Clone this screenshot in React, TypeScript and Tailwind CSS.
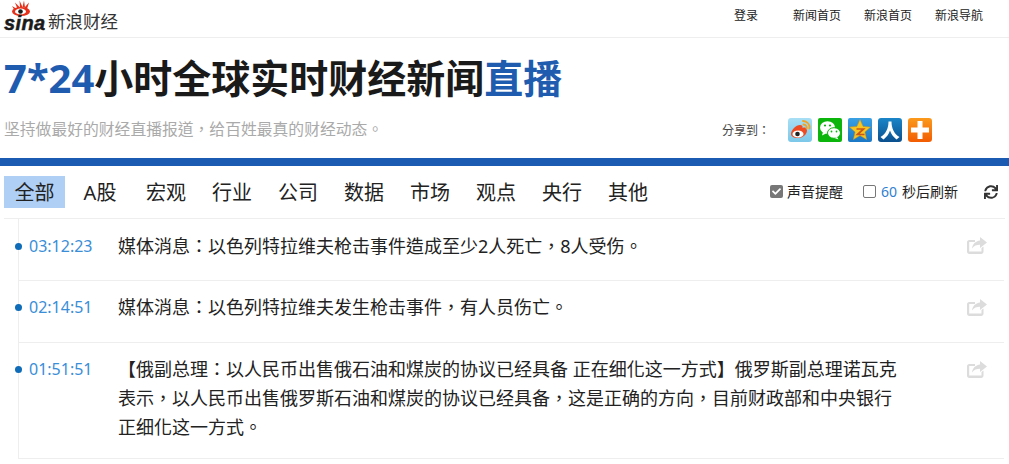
import { FaSync, FaCheck } from "react-icons/fa";

const cjk = "font-['Noto_Sans','Noto_Sans_CJK_SC',sans-serif]";
const cjkCentered = "font-['Noto_Sans','Noto_Sans_CJK_TC',sans-serif]";

const navLinks = ["登录", "新闻首页", "新浪首页", "新浪导航"];
const tabs = ["全部", "A股", "宏观", "行业", "公司", "数据", "市场", "观点", "央行", "其他"];

const news = [
  { time: "03:12:23", text: "媒体消息：以色列特拉维夫枪击事件造成至少2人死亡，8人受伤。" },
  { time: "02:14:51", text: "媒体消息：以色列特拉维夫发生枪击事件，有人员伤亡。" },
  {
    time: "01:51:51",
    text: "【俄副总理：以人民币出售俄石油和煤炭的协议已经具备 正在细化这一方式】俄罗斯副总理诺瓦克表示，以人民币出售俄罗斯石油和煤炭的协议已经具备，这是正确的方向，目前财政部和中央银行正细化这一方式。",
  },
];

function SinaLogo() {
  return (
    <div className="flex items-end h-[37px] pl-[4px] pb-[6px]">
      <div className="relative w-[44px] h-[30px]">
        <svg viewBox="0 0 20 16" className="absolute left-[7px] top-[-1px] w-[20px] h-[16px]">
          <g fill="#e6301a">
            <path d="M1 6 L4 11 L6 9z" />
            <path d="M4 2.500 L6.500 9 L9 7.500z" />
            <path d="M8.500 .5 L9 7.500 L11.500 7z" />
            <path d="M13 .5 L11.500 7 L14 7.500z" />
            <path d="M18 2.500 L13.500 7.500 L16 9z" />
          </g>
          <ellipse cx="10" cy="11.500" rx="9" ry="4.500" fill="#e6301a" />
          <ellipse cx="9.500" cy="11.500" rx="5.500" ry="3" fill="#fff" />
          <circle cx="9.500" cy="11.500" r="2.300" fill="#1a1a1a" />
        </svg>
        <span className="absolute left-0 bottom-[-1px] font-['Liberation_Sans',sans-serif] text-[20px] leading-[18px] font-bold italic tracking-[0.4px] text-[#1a1a1a] [-webkit-text-stroke:0.5px_#1a1a1a]">
          sina
        </span>
      </div>
      <span className="text-[17.500px] leading-[20px] text-[#333] font-['Noto_Sans_CJK_SC',sans-serif]">
        新浪财经
      </span>
    </div>
  );
}

function ShareIcons() {
  return (
    <div className="flex gap-[6px] mt-[2px]">
      <svg viewBox="0 0 24 24" className="w-6 h-6">
        <defs>
          <linearGradient id="wb" x1="0" y1="0" x2="0" y2="1">
            <stop offset="0" stopColor="#a8dff5" />
            <stop offset="1" stopColor="#7cc8ea" />
          </linearGradient>
          <linearGradient id="qz" x1="0" y1="0" x2="0" y2="1">
            <stop offset="0" stopColor="#3aa0e4" />
            <stop offset="1" stopColor="#1a78c6" />
          </linearGradient>
          <linearGradient id="rr" x1="0" y1="0" x2="0" y2="1">
            <stop offset="0" stopColor="#1b86c8" />
            <stop offset="1" stopColor="#0b4f8e" />
          </linearGradient>
          <linearGradient id="pl" x1="0" y1="0" x2="0" y2="1">
            <stop offset="0" stopColor="#fb9a1c" />
            <stop offset="1" stopColor="#f25c02" />
          </linearGradient>
        </defs>
        <rect width="24" height="24" rx="3" fill="url(#wb)" />
        <path d="M3 16c0-4 5-9 9-9 2 0 3 1 2.500 3 3-1 4.500 0 4.500 2.500 0 4-4.500 7.500-9 7.500-4 0-7-1.500-7-4z" fill="#ee4b22" />
        <ellipse cx="10" cy="16" rx="5.500" ry="3.600" fill="#fff" />
        <circle cx="9.500" cy="16" r="2.300" fill="#222" />
        <path d="M15 3a6.500 6.500 0 0 1 6.500 7.500M15.500 6.500a3 3 0 0 1 3 4" stroke="#f5a21e" strokeWidth="1.800" fill="none" strokeLinecap="round" />
      </svg>
      <svg viewBox="0 0 24 24" className="w-6 h-6">
        <rect width="24" height="24" rx="2" fill="#0bb50b" />
        <ellipse cx="9.500" cy="9.500" rx="7.500" ry="6.300" fill="#fff" />
        <path d="M5 14l-1 3.500 4-2z" fill="#fff" />
        <ellipse cx="16" cy="15" rx="6.500" ry="5.300" fill="#fff" stroke="#0bb50b" />
        <path d="M19 19l1.500 2.500-4-1.500z" fill="#fff" />
        <circle cx="7" cy="7.500" r="1.100" fill="#0bb50b" />
        <circle cx="12" cy="7.500" r="1.100" fill="#0bb50b" />
        <circle cx="13.500" cy="13.500" r=".9" fill="#0bb50b" />
        <circle cx="18.500" cy="13.500" r=".9" fill="#0bb50b" />
      </svg>
      <svg viewBox="0 0 24 24" className="w-6 h-6">
        <rect width="24" height="24" rx="2" fill="url(#qz)" />
        <path d="M12 1.500l3.100 6.900 7.400.7-5.600 4.900 1.700 7.500-6.600-3.900-6.600 3.900 1.700-7.500-5.600-4.900 7.400-.7z" fill="#f8c61e" stroke="#d0901a" strokeWidth=".5" />
        <path d="M8.500 11h7l-6 5.500h7" stroke="#c9561a" strokeWidth="1.700" fill="none" />
      </svg>
      <svg viewBox="0 0 24 24" className="w-6 h-6">
        <rect width="24" height="24" rx="3" fill="url(#rr)" />
        <path d="M10.500 3.500h3C13.500 10 16 16 21.500 19l-3 2.500C15.500 19 13 16 12 12.500 11 16 8.500 19 5.500 21.500l-3-2.500C8 16 10.500 10 10.500 3.500z" fill="#fff" />
      </svg>
      <svg viewBox="0 0 24 24" className="w-6 h-6">
        <rect width="24" height="24" rx="3" fill="url(#pl)" />
        <rect x="9.500" y="3" width="5" height="18" fill="#fff" />
        <rect x="3" y="9.500" width="18" height="5" fill="#fff" />
      </svg>
    </div>
  );
}

function ShareArrow() {
  return (
    <svg viewBox="0 0 20 17" className="w-5 h-[17px] text-[#dcdcdc]" fill="currentColor">
      <path d="M14.500 11v3.500H2.200V5H8V3H2.200C1 3 0 4 0 5.200v9.600C0 16 1 17 2.200 17h12.100c1.200 0 2.200-1 2.200-2.200V9.500z" />
      <path d="M13 0l7 5.500-7 5.500V7.800C9.500 7.800 7 8.800 5 11.500 5.500 7 8.500 4 13 3.400z" />
    </svg>
  );
}

export default function App() {
  return (
    <div className={`w-[1009px] h-[464px] overflow-hidden bg-white ${cjk}`}>
      <header className="flex justify-between h-[38px] border-b border-[#eee]">
        <SinaLogo />
        <nav className="flex pt-[7px] pr-[26px] text-[12px] leading-[17px] text-[#222]">
          {navLinks.map((l, i) => (
            <a key={l} className={i === 0 ? "mr-[12px] -ml-px" : "ml-[23px]"}>
              {l}
            </a>
          ))}
        </nav>
      </header>

      <div className="h-[120px] pl-1">
        <h1 className="pt-[11px] text-[39px] leading-[58px] font-bold text-[#1a1a1a]">
          <span className="text-[40px] text-[#1f5cb0]">7*24</span>小时全球实时财经新闻
          <span className="text-[#1f5cb0]">直播</span>
        </h1>
        <div className="flex items-center mt-[9px]">
          <p className={`w-[718px] text-[15.800px] leading-[22px] text-[#aaa] ${cjkCentered}`}>
            坚持做最好的财经直播报道，给百姓最真的财经动态。
          </p>
          <span className={`w-[66px] mt-[3px] text-[12px] text-[#444] ${cjkCentered}`}>分享到：</span>
          <ShareIcons />
        </div>
      </div>

      <div className="h-2 bg-[#1b5bb1]" />

      <div className="flex items-center h-[53px] mx-1 border-b border-[#eee]">
        <ul className="flex gap-[5px] text-[20px] leading-[32px] text-[#222]">
          {tabs.map((t, i) => (
            <li key={t} className={`w-[61px] h-[32px] pt-[1px] pr-[1px] first:pr-0 text-center ${i === 0 ? "bg-[#b0cff5]" : ""}`}>
              {t}
            </li>
          ))}
        </ul>
        <div className="flex items-center ml-auto mb-[1px] text-[14px] text-[#222]">
          <span className="flex items-center justify-center w-[13px] h-[13px] rounded-[2px] bg-[#777] text-white">
            <FaCheck className="w-[9px] h-[9px]" />
          </span>
          <span className="ml-[4px]">声音提醒</span>
          <span className="ml-[20px] w-[13px] h-[13px] rounded-[2px] border border-[#777]" />
          <span className="ml-[5px] text-[#2f7fd1]">60</span>
          <span className="ml-[5px]">秒后刷新</span>
          <FaSync className="ml-[26px] mr-[7px] w-[14px] h-[14px] text-[#333]" />
        </div>
      </div>

      <ul className="ml-[18px] mr-[5px] border-l border-[#eee]">
        {news.map((n) => (
          <li
            key={n.time}
            className="group relative flex border-b border-[#eee] pt-[12px] pb-[20px] pr-[17px] first:pt-[13px] first:pb-[19px] last:pb-[16px]"
          >
            <span className="absolute left-[-4px] top-[23px] group-first:top-[24px] w-[7px] h-[7px] rounded-full bg-[#0f6cb8]" />
            <span className="w-[99px] shrink-0 pl-[10px] text-[16px] leading-[29px] text-[#3a8ed8]">{n.time}</span>
            <p className={`w-[780px] text-[18px] leading-[29px] text-[#222] ${cjkCentered}`}>{n.text}</p>
            <span className="ml-auto pt-[6px] group-first:pt-[5px]">
              <ShareArrow />
            </span>
          </li>
        ))}
      </ul>
    </div>
  );
}
